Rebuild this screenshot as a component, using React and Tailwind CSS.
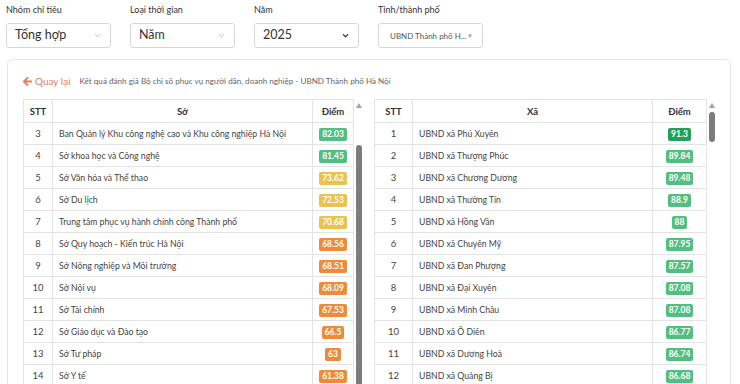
import React from "react";

const left = [
  [3, "Ban Quản lý Khu công nghệ cao và Khu công nghiệp Hà Nội", "82.03", "g"],
  [4, "Sở khoa học và Công nghệ", "81.45", "g"],
  [5, "Sở Văn hóa và Thể thao", "73.62", "y"],
  [6, "Sở Du lịch", "72.53", "y"],
  [7, "Trung tâm phục vụ hành chính công Thành phố", "70.68", "y"],
  [8, "Sở Quy hoạch - Kiến trúc Hà Nội", "68.56", "o"],
  [9, "Sở Nông nghiệp và Môi trường", "68.51", "o"],
  [10, "Sở Nội vụ", "68.09", "o"],
  [11, "Sở Tài chính", "67.53", "o"],
  [12, "Sở Giáo dục và Đào tạo", "66.5", "o"],
  [13, "Sở Tư pháp", "63", "o"],
  [14, "Sở Y tế", "61.38", "o"],
  [15, "Sở Xây dựng", "60.12", "o"],
];

const right = [
  [1, "UBND xã Phú Xuyên", "91.3", "d"],
  [2, "UBND xã Thượng Phúc", "89.84", "g"],
  [3, "UBND xã Chương Dương", "89.48", "g"],
  [4, "UBND xã Thường Tín", "88.9", "g"],
  [5, "UBND xã Hồng Vân", "88", "g"],
  [6, "UBND xã Chuyên Mỹ", "87.95", "g"],
  [7, "UBND xã Đan Phượng", "87.57", "g"],
  [8, "UBND xã Đại Xuyên", "87.08", "g"],
  [9, "UBND xã Minh Châu", "87.08", "g"],
  [10, "UBND xã Ô Diên", "86.77", "g"],
  [11, "UBND xã Dương Hoà", "86.74", "g"],
  [12, "UBND xã Quảng Bị", "86.68", "g"],
  [13, "UBND xã Tiến Thắng", "86.5", "g"],
];

function badgeClass(c) {
  if (c === "d") return "bg-[#21a05a]";
  if (c === "g") return "bg-[#52bf80]";
  if (c === "y") return "bg-[#e9c34d]";
  return "bg-[#ee8b39]";
}

function Chevron({ dark }) {
  return (
    <svg width="7" height="5" viewBox="0 0 8 6" className="shrink-0">
      <path d="M1 1.5 L4 4.5 L7 1.5" fill="none" stroke={dark ? "#444" : "#aaa"} strokeWidth={dark ? "1.5" : "1"} />
    </svg>
  );
}

function Select({ children, dark, small }) {
  return (
    <div className={"w-[105px] h-[25px] border border-[#d6d6d6] rounded-[3px] flex items-center justify-between pr-[9px] " + (small ? "pl-[11px]" : "pl-[8px]")}>
      <span className={small ? "text-[8px] text-[#555] whitespace-nowrap" : "text-[12.5px] text-[#333]"}>{children}</span>
      {small ? (
        <span className="text-[6px] text-[#999]">▼</span>
      ) : (
        <Chevron dark={dark} />
      )}
    </div>
  );
}

function Field({ label, children }) {
  return (
    <div className="flex flex-col gap-[6px]">
      <div className="text-[9px] text-[#333] leading-[14px]">{label}</div>
      {children}
    </div>
  );
}

function Scrollbar({ thumbTop, thumbHeight }) {
  return (
    <div className="w-[11px] relative shrink-0">
      <div className="absolute left-[2px] top-[4px] w-0 h-0 border-l-[3px] border-r-[3px] border-b-[5px] border-l-transparent border-r-transparent border-b-[#a3a3a3]" />
      <div
        className="absolute left-[2px] w-[6px] rounded-full bg-[#7c7c7c]"
        style={{ top: thumbTop, height: thumbHeight }}
      />
    </div>
  );
}

function Table({ rows, title, w1, w2, w3 }) {
  return (
    <table className="border-collapse table-fixed text-[#333] text-[9px] leading-[13px] self-start" style={{ width: w1 + w2 + w3 }}>
      <colgroup>
        <col style={{ width: w1 }} />
        <col style={{ width: w2 }} />
        <col style={{ width: w3 }} />
      </colgroup>
      <thead>
        <tr className="h-[23px]">
          <th className="border border-[#e3e3e3] font-bold text-center text-[9.5px]">STT</th>
          <th className="border border-[#e3e3e3] font-bold text-center text-[9.5px]">{title}</th>
          <th className="border border-[#e3e3e3] font-bold text-center text-[9.5px]">Điểm</th>
        </tr>
      </thead>
      <tbody>
        {rows.map((r) => (
          <tr key={r[0]} className="h-[22px]">
            <td className="border border-[#e3e3e3] text-center text-[#444] text-[9.5px]">{r[0]}</td>
            <td className="border border-[#e3e3e3] pl-[6px] whitespace-nowrap overflow-hidden text-[#444] text-[8.7px]">{r[1]}</td>
            <td className="border border-[#e3e3e3] text-center">
              <span className={"inline-block align-middle text-white font-bold text-[8.5px] leading-[13px] px-[3px] rounded-[2px] " + badgeClass(r[3])}>
                {r[2]}
              </span>
            </td>
          </tr>
        ))}
      </tbody>
    </table>
  );
}

export default function App() {
  return (
    <div className="w-[740px] h-[384px] overflow-hidden bg-white" style={{ fontFamily: "Lato, 'Noto Sans', sans-serif" }}>
      <div className="flex gap-[19px] pl-[6px] pt-[3px]">
        <Field label="Nhóm chỉ tiêu">
          <Select>Tổng hợp</Select>
        </Field>
        <Field label="Loại thời gian">
          <Select>Năm</Select>
        </Field>
        <Field label="Năm">
          <Select dark>2025</Select>
        </Field>
        <Field label="Tỉnh/thành phố">
          <Select small>UBND Thành phố H...</Select>
        </Field>
      </div>
      <div className="mx-[7px] mt-[11px] w-[724px] h-[400px] border border-[#e6e6e6] rounded-[6px] px-[15px] pt-[13px]">
        <div className="flex items-center h-[16px]">
          <span className="text-[#e0805a] text-[10px] flex items-center gap-[3px]">
            <svg width="9" height="9" viewBox="0 0 10 10">
              <path d="M1 5 L5 1 M1 5 L5 9 M1 5 L9.5 5" stroke="#e0805a" strokeWidth="2" fill="none" strokeLinecap="round" />
            </svg>
            Quay lại
          </span>
          <span className="ml-[9px] text-[8.1px] text-[#666]">
            Kết quả đánh giá Bộ chỉ số phục vụ người dân, doanh nghiệp - UBND Thành phố Hà Nội
          </span>
        </div>
        <div className="grid grid-cols-2 gap-[10px] mt-[10px]">
          <div className="flex h-[300px]">
            <Table rows={left} title="Sở" w1={29} w2={260} w3={41} />
            <Scrollbar thumbTop={46} thumbHeight={260} />
          </div>
          <div className="flex h-[300px]">
            <Table rows={right} title="Xã" w1={38} w2={240} w3={54} />
            <Scrollbar thumbTop={13} thumbHeight={30} />
          </div>
        </div>
      </div>
    </div>
  );
}
